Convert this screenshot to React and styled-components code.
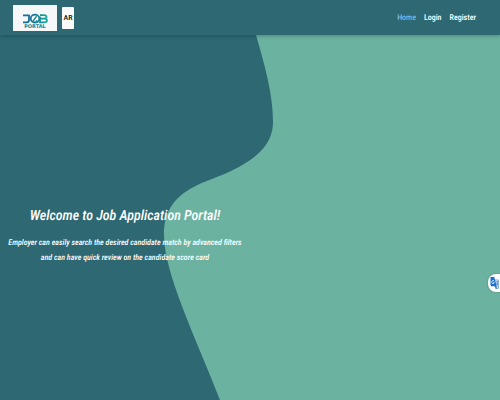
import React from "react";
import styled, { createGlobalStyle } from "styled-components";

const fontStack = `"Roboto Condensed", "Liberation Sans Narrow", Roboto, sans-serif`;

const GlobalStyle = createGlobalStyle`
  * { box-sizing: border-box; }
  body {
    margin: 0;
    background: #2d6873;
    font-family: ${fontStack};
    text-rendering: geometricPrecision;
  }
`;

const Page = styled.div`
  min-height: 100vh;
  display: flex;
  flex-direction: column;
`;

const Header = styled.header`
  position: relative;
  z-index: 1;
  display: flex;
  align-items: center;
  gap: 5px;
  height: 35px;
  padding: 0 24px 0 13px;
  background: #2d6873;
  box-shadow: 0 1px 4px rgba(0, 0, 0, 0.25);
`;

const LogoLink = styled.a`
  display: flex;
  width: 44px;
  height: 26px;
  background: #f5f7f8;
`;

const LanguageButton = styled.button`
  width: 12px;
  height: 22px;
  padding: 0;
  border: 0;
  border-radius: 1px;
  background: #fafafa;
  color: #111;
  font: 500 8px/22px ${fontStack};
  text-align: center;
`;

const Nav = styled.nav`
  display: flex;
  gap: 8px;
  margin-left: auto;
`;

const NavLink = styled.a`
  color: ${({ $active }) => ($active ? "#90caf9" : "#fff")};
  font-size: 8px;
  font-weight: ${({ $active }) => ($active ? 400 : 500)};
  line-height: 16px;
  text-decoration: none;
`;

const Hero = styled.main`
  position: relative;
  flex: 1;
  display: grid;
  grid-template-columns: 1fr 1fr;
  align-items: center;
  padding-top: 34px;
`;

const Wave = styled.svg`
  position: absolute;
  inset: 0;
  width: 100%;
  height: 100%;
`;

const Intro = styled.section`
  position: relative;
  padding: 0 4px;
  color: #fff;
  font-style: italic;
  text-align: center;
`;

const Title = styled.h1`
  margin: 0 0 7px;
  font-size: 14px;
  font-weight: 500;
  line-height: 24px;
`;

const Lead = styled.p`
  margin: 0;
  font-size: 8px;
  font-weight: 500;
  line-height: 15px;
`;

const TranslateButton = styled.button`
  position: fixed;
  z-index: 2;
  top: 274px;
  right: 0;
  display: flex;
  align-items: center;
  width: 12px;
  height: 18px;
  padding: 0 0 0 2px;
  border: 0;
  border-radius: 8px 0 0 8px;
  background: #fff;
  box-shadow: 0 0 2px rgba(0, 0, 0, 0.3);
`;

function Logo() {
  return (
    <svg width="44" height="26" viewBox="0 0 44 26" role="img" aria-label="Job Portal">
      <defs>
        <linearGradient id="logo" gradientUnits="userSpaceOnUse" x1="9" y1="0" x2="35" y2="0">
          <stop offset="0" stopColor="#176a9e" />
          <stop offset="0.5" stopColor="#137993" />
          <stop offset="1" stopColor="#17b0a7" />
        </linearGradient>
      </defs>
      <g fill="none" stroke="url(#logo)" strokeWidth="1.8">
        <path d="M10 10.3h6v5q0 2-2.5 2H10" />
        <ellipse cx="22" cy="13.6" rx="4.3" ry="3.9" />
        <path d="M20 16.1l3.6-5M23 15.4l2 2.2" strokeWidth="1.3" />
        <path d="M27 10.2h4q2.5 0 2.5 1.7t-2.5 1.7h-3.7M31 13.6q3 0 3 1.9t-3 1.9h-4v-5.9" />
      </g>
      <text x="22" y="23" textAnchor="middle" fill="#16858f" fontFamily="DejaVu Sans, sans-serif" fontSize="5" fontWeight="700">
        PORTAL
      </text>
    </svg>
  );
}

function TranslateIcon() {
  return (
    <svg width="10" height="14" viewBox="0 0 10 14" aria-hidden="true">
      <path d="M4 4h4.3v8.4H5.8z" fill="#fff" stroke="#4c8bd8" strokeWidth="0.8" />
      <path d="M.5 1h3.7l2.6 9.2H1.2L.5 9z" fill="#1b6fd0" />
      <path d="M4 4.5H2.9q-1.2.2-1.2 1.6T3 7.7q1.2 0 1.2-1.4H3" fill="none" stroke="#fff" strokeWidth="0.7" />
      <path d="M5.9 6h2.2M7 5v1M7.8 6q-.2 2-1.5 3M6.6 7l1.4 2.3M5 10.3l1 2.1 1.2-2.1z" fill="none" stroke="#2f75ca" strokeWidth="0.7" />
    </svg>
  );
}

export default function App() {
  return (
    <>
      <GlobalStyle />
      <Page>
        <Header>
          <LogoLink href="#home"><Logo /></LogoLink>
          <LanguageButton type="button" aria-label="AR, switch to Arabic">AR</LanguageButton>
          <Nav>
            <NavLink href="#home" $active>Home</NavLink>
            <NavLink href="#login">Login</NavLink>
            <NavLink href="#register">Register</NavLink>
          </Nav>
        </Header>
        <Hero>
          <Wave viewBox="0 0 500 365" preserveAspectRatio="none" aria-hidden="true">
            <path
              d="M256 0C264 28 273 58 273 87C273 111 254 125 229 137C203 149 164 155 164 200C164 238 195 301 220 365H500V0Z"
              fill="#6cb2a1"
            />
          </Wave>
          <Intro>
            <Title>Welcome to Job Application Portal!</Title>
            <Lead>
              Employer can easily search the desired candidate match by advanced filters
              <br />
              and can have quick review on the candidate score card
            </Lead>
          </Intro>
        </Hero>
      </Page>
      <TranslateButton type="button" aria-label="Translate"><TranslateIcon /></TranslateButton>
    </>
  );
}
